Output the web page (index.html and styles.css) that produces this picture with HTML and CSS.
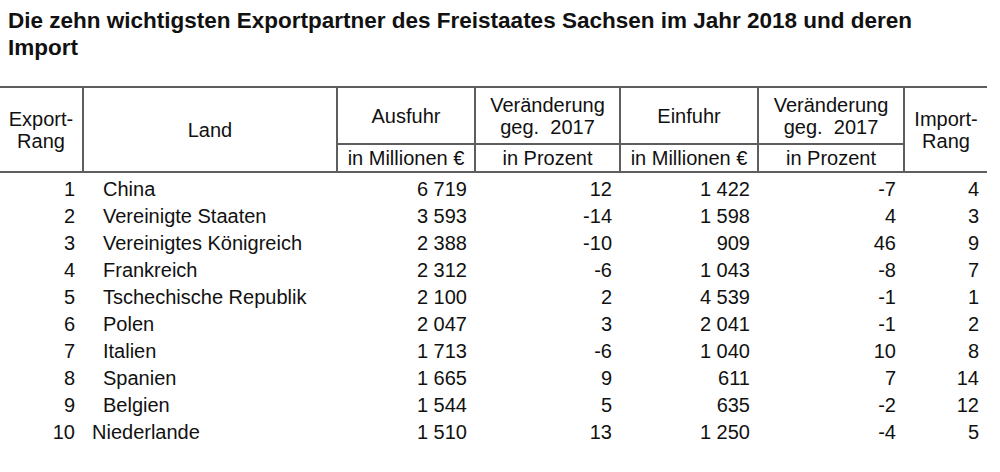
FILE: index.html
```html
<!DOCTYPE html>
<html lang="de">
<head>
<meta charset="utf-8">
<title>Exportpartner Sachsen 2018</title>
<link rel="stylesheet" href="styles.css">
</head>
<body>
<h1 class="title">Die zehn wichtigsten Exportpartner des Freistaates Sachsen im Jahr 2018 und deren Import</h1>
<table class="trade">
  <colgroup>
    <col class="c-rank">
    <col class="c-land">
    <col class="c-aus">
    <col class="c-ver1">
    <col class="c-ein">
    <col class="c-ver2">
    <col class="c-imp">
  </colgroup>
  <thead>
    <tr class="h1">
      <th rowspan="2" class="vl">Export-<br>Rang</th>
      <th rowspan="2" class="vl">Land</th>
      <th class="vl">Ausfuhr</th>
      <th class="vl">Veränderung<br>geg.&nbsp; 2017</th>
      <th class="vl">Einfuhr</th>
      <th class="vl">Veränderung<br>geg.&nbsp; 2017</th>
      <th rowspan="2">Import-<br>Rang</th>
    </tr>
    <tr class="h2">
      <th class="vl">in Millionen €</th>
      <th class="vl">in Prozent</th>
      <th class="vl">in Millionen €</th>
      <th class="vl">in Prozent</th>
    </tr>
  </thead>
  <tbody>
    <tr class="first"><td>1</td><td class="land">China</td><td>6 719</td><td>12</td><td>1 422</td><td>-7</td><td>4</td></tr>
    <tr><td>2</td><td class="land">Vereinigte Staaten</td><td>3 593</td><td>-14</td><td>1 598</td><td>4</td><td>3</td></tr>
    <tr><td>3</td><td class="land">Vereinigtes Königreich</td><td>2 388</td><td>-10</td><td>909</td><td>46</td><td>9</td></tr>
    <tr><td>4</td><td class="land">Frankreich</td><td>2 312</td><td>-6</td><td>1 043</td><td>-8</td><td>7</td></tr>
    <tr><td>5</td><td class="land">Tschechische Republik</td><td>2 100</td><td>2</td><td>4 539</td><td>-1</td><td>1</td></tr>
    <tr><td>6</td><td class="land">Polen</td><td>2 047</td><td>3</td><td>2 041</td><td>-1</td><td>2</td></tr>
    <tr><td>7</td><td class="land">Italien</td><td>1 713</td><td>-6</td><td>1 040</td><td>10</td><td>8</td></tr>
    <tr><td>8</td><td class="land">Spanien</td><td>1 665</td><td>9</td><td>611</td><td>7</td><td>14</td></tr>
    <tr><td>9</td><td class="land">Belgien</td><td>1 544</td><td>5</td><td>635</td><td>-2</td><td>12</td></tr>
    <tr><td>10</td><td class="land land-flush">Niederlande</td><td>1 510</td><td>13</td><td>1 250</td><td>-4</td><td>5</td></tr>
  </tbody>
</table>
</body>
</html>
```

FILE: styles.css
```css
html, body {
  margin: 0;
  padding: 0;
  background: #ffffff;
}

body {
  font-family: "Liberation Sans", Arial, sans-serif;
  color: #111111;
}

.title {
  margin: 7px 0 0 0;
  padding-left: 8px;
  width: 940px;
  font-size: 22.5px;
  line-height: 27px;
  font-weight: bold;
  color: #111111;
}

.trade {
  margin-top: 25px;
  width: 987px;
  table-layout: fixed;
  border-collapse: collapse;
  font-size: 20px;
}

.c-rank { width: 83px; }
.c-land { width: 254px; }
.c-aus { width: 138px; }
.c-ver1 { width: 145px; }
.c-ein { width: 138px; }
.c-ver2 { width: 146px; }
.c-imp { width: 83px; }

.trade thead tr.h1 {
  border-top: 2px solid #5e5e5e;
}

.trade thead tr.h2 {
  border-bottom: 2px solid #5e5e5e;
}

.trade th {
  font-weight: normal;
  text-align: center;
  vertical-align: middle;
  line-height: 22px;
  padding: 0;
}

.trade tr.h1 th {
  height: 55px;
}

.trade tr.h2 th {
  height: 26px;
  border-top: 2px solid #5e5e5e;
}

.trade th.vl {
  border-right: 2px solid #5e5e5e;
}

.trade td {
  padding: 0 8px 0 0;
  line-height: 27px;
  text-align: right;
  white-space: nowrap;
}

.trade tr.first td {
  padding-top: 3px;
}

.trade td.land {
  text-align: left;
  padding-left: 20px;
}

.trade td.land-flush {
  padding-left: 9px;
}
```
